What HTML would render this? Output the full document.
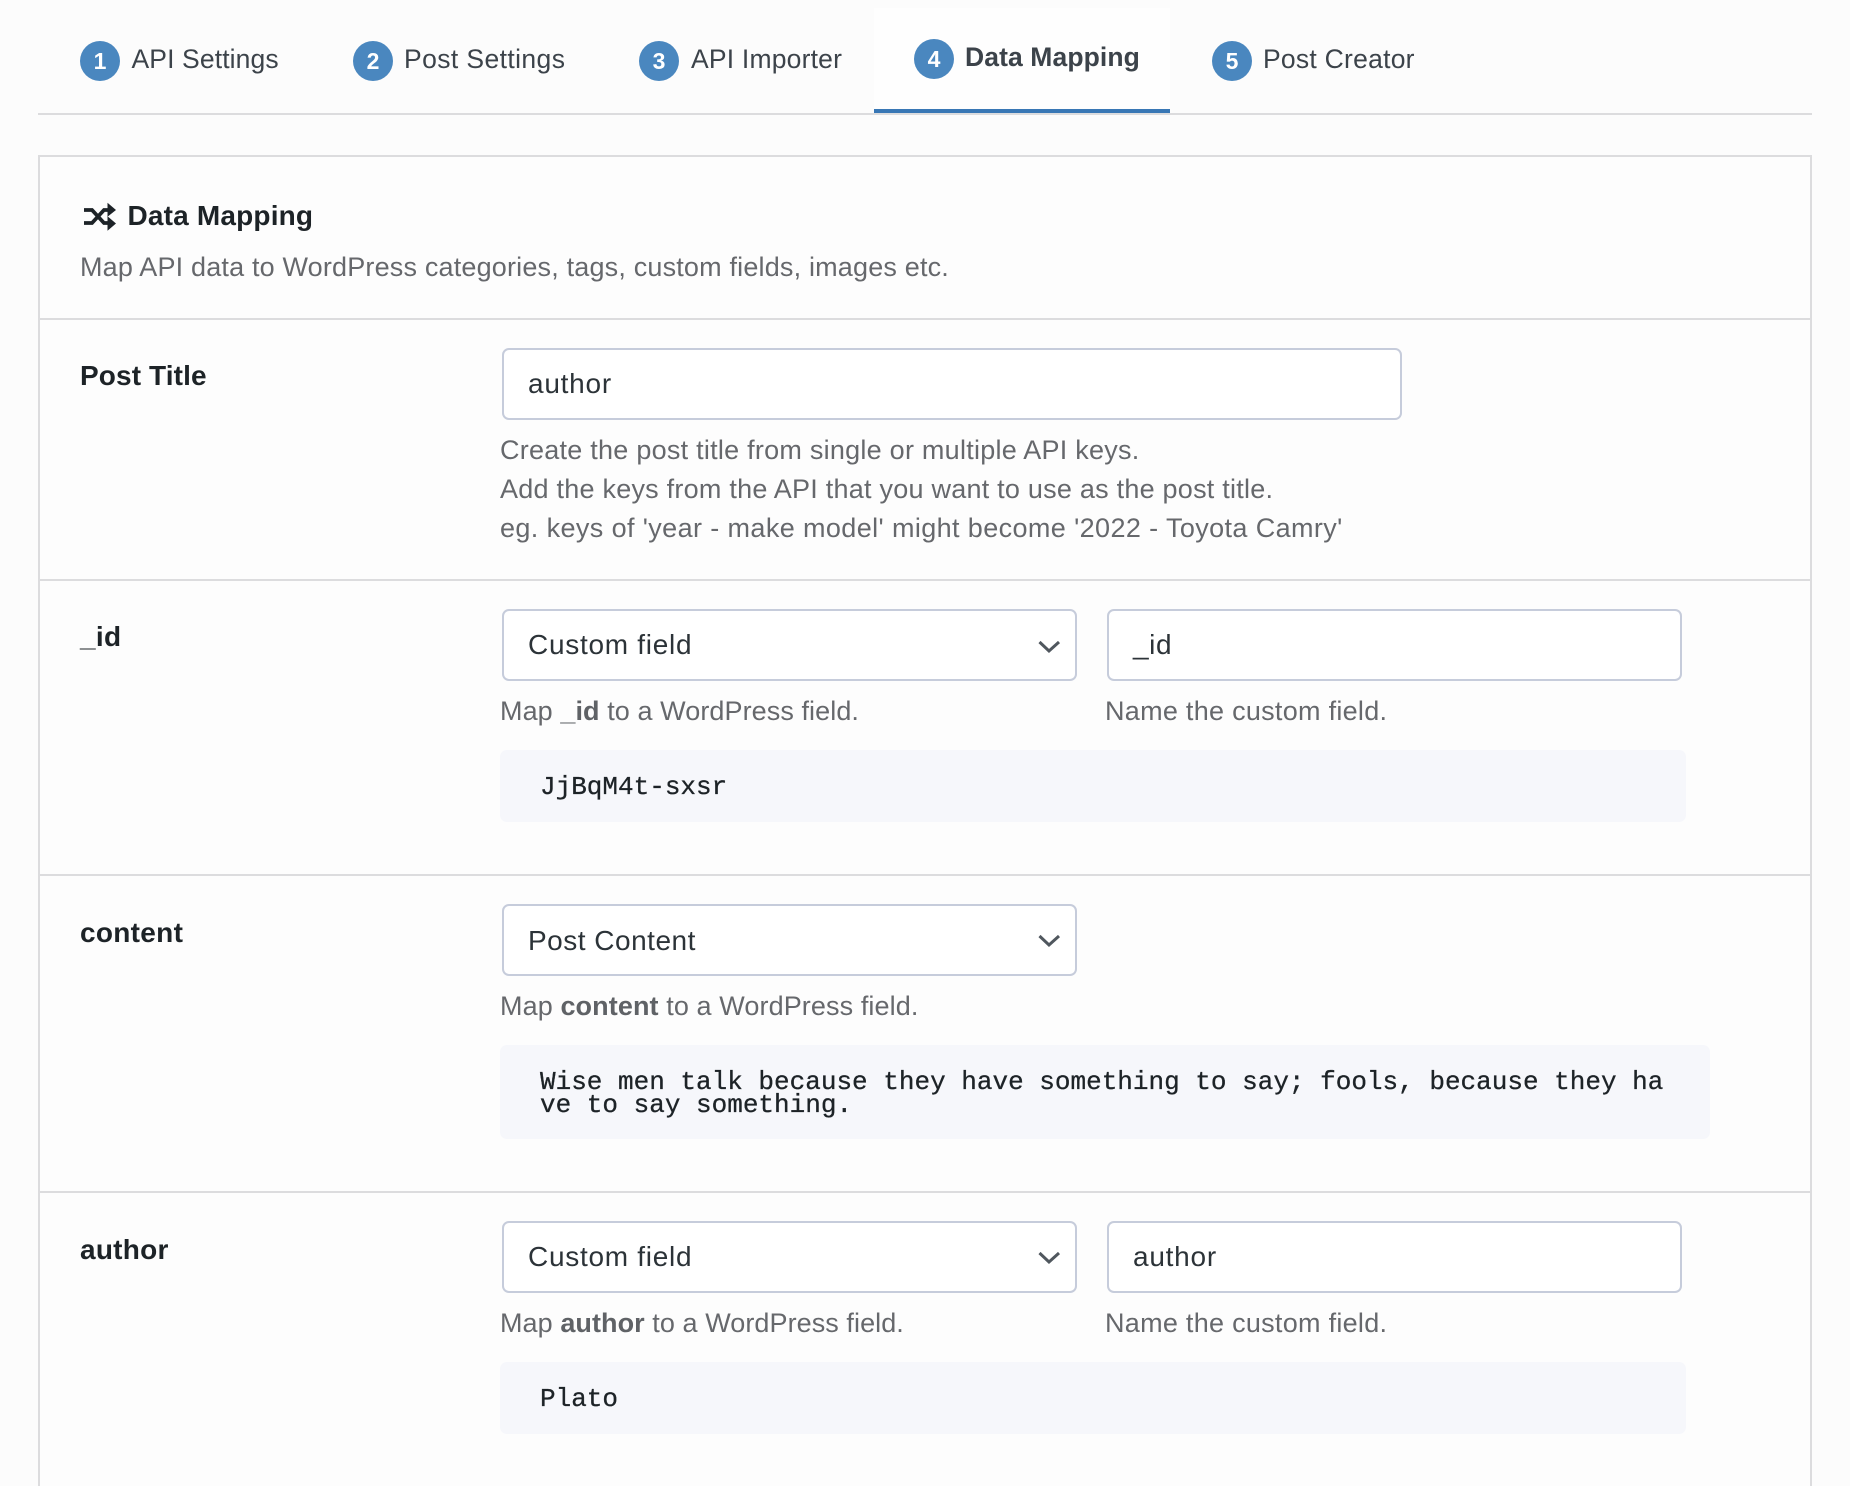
<!DOCTYPE html>
<html><head><meta charset="utf-8"><title>Data Mapping</title>
<style>
html,body{margin:0;padding:0;width:1850px;height:1486px;overflow:hidden;background:#fcfcfc}
body{position:relative;font-family:"Liberation Sans",sans-serif}
.a{position:absolute;box-sizing:border-box}
.t{position:absolute;white-space:nowrap;line-height:40px}
.tab{font-size:26.5px;color:#3c434a}
.c{position:absolute;width:40px;height:40px;border-radius:50%;background:#4a87bf;color:#fff;font-weight:700;font-size:23px;line-height:40px;text-align:center}
.lb{font-size:28px;font-weight:700;color:#1d2327;left:80px;letter-spacing:.12px}
.in{position:absolute;box-sizing:border-box;background:#fff;border:2px solid #c6ccdb;border-radius:7px}
.v{font-size:28px;color:#2c3338;letter-spacing:.72px}
.h{font-size:27px;color:#66686c}
.h b{font-weight:700;color:#5f6266}
.code{position:absolute;left:500px;background:#f6f7fb;border-radius:7px}
.m{position:absolute;left:540px;font:26px/23px "Liberation Mono",monospace;color:#1d2327;white-space:pre;-webkit-text-stroke:.3px #1d2327}
.ln{position:absolute;left:38px;width:1774px;height:2px;background:#dcdcde}
svg{position:absolute;overflow:visible}
</style></head><body>

<div class="a" style="left:874px;top:8px;width:296px;height:105px;background:#fefefe;border-bottom:4px solid #3877b5"></div>
<div class="a" style="left:38px;top:113px;width:1774px;height:2px;background:#dcdcde"></div>

<div class="c" style="left:80px;top:41px">1</div><div class="t tab" style="left:131.5px;top:39px;letter-spacing:.12px">API Settings</div>
<div class="c" style="left:353px;top:41px">2</div><div class="t tab" style="left:404px;top:39px;letter-spacing:.4px">Post Settings</div>
<div class="c" style="left:639px;top:41px">3</div><div class="t tab" style="left:691px;top:39px;letter-spacing:.2px">API Importer</div>
<div class="c" style="left:914px;top:39px">4</div><div class="t tab" style="left:965px;top:37px;font-weight:700;letter-spacing:.1px">Data Mapping</div>
<div class="c" style="left:1212px;top:41px">5</div><div class="t tab" style="left:1263px;top:39px;letter-spacing:.25px">Post Creator</div>

<div class="a" style="left:38px;top:155px;width:1774px;height:1340px;border:2px solid #dcdcde;background:#fdfdfd"></div>

<svg style="left:0;top:0" width="1850" height="300"><path d="M84 210H92L104 223H110M84 223H92L104 210H110" fill="none" stroke="#1d2327" stroke-width="3.8"/><path d="M107.5 202.7L116 210L107.5 216.7ZM107.5 216.3L116 223.5L107.5 230.7Z" fill="#1d2327"/></svg>
<div class="t" style="left:127.5px;top:195.5px;font-size:28px;font-weight:700;color:#1d2327;letter-spacing:.18px">Data Mapping</div>
<div class="t h" style="left:80px;top:247px;letter-spacing:.18px">Map API data to WordPress categories, tags, custom fields, images etc.</div>

<div class="ln" style="top:318px"></div>
<div class="t lb" style="top:356px">Post Title</div>
<div class="in" style="left:502px;top:348px;width:900px;height:72px"></div>
<div class="t v" style="left:528px;top:364px;letter-spacing:.75px">author</div>
<div class="t h" style="left:500px;top:429.5px;letter-spacing:.25px">Create the post title from single or multiple API keys.</div>
<div class="t h" style="left:500px;top:468.5px;letter-spacing:.235px">Add the keys from the API that you want to use as the post title.</div>
<div class="t h" style="left:500px;top:507.5px;letter-spacing:.39px">eg. keys of 'year - make model' might become '2022 - Toyota Camry'</div>

<div class="ln" style="top:579px"></div>
<div class="t lb" style="top:617px;letter-spacing:.3px">_id</div>
<div class="in" style="left:502px;top:609px;width:575px;height:72px"></div>
<div class="t v" style="left:528px;top:625px">Custom field</div>
<svg style="left:0;top:0" width="1850" height="1486"><path d="M1039.5 642L1049 651L1059 642" fill="none" stroke="#50575e" stroke-width="3"/></svg>
<div class="in" style="left:1107px;top:609px;width:575px;height:72px"></div>
<div class="t v" style="left:1133px;top:625px;letter-spacing:.6px">_id</div>
<div class="t h" style="left:500px;top:691px;letter-spacing:.08px">Map <b>_id</b> to a WordPress field.</div>
<div class="t h" style="left:1105px;top:691px;letter-spacing:.28px">Name the custom field.</div>
<div class="code" style="top:750px;width:1186px;height:72px"></div>
<div class="m" style="top:775.5px">JjBqM4t-sxsr</div>

<div class="ln" style="top:874px"></div>
<div class="t lb" style="top:912.5px;letter-spacing:.3px">content</div>
<div class="in" style="left:502px;top:904px;width:575px;height:72px"></div>
<div class="t v" style="left:528px;top:920.5px;letter-spacing:.5px">Post Content</div>
<div class="t h" style="left:500px;top:986px;letter-spacing:.1px">Map <b>content</b> to a WordPress field.</div>
<div class="code" style="top:1045px;width:1210px;height:94px"></div>
<div class="m" style="top:1070.5px">Wise men talk because they have something to say; fools, because they ha
ve to say something.</div>

<div class="ln" style="top:1191px"></div>
<div class="t lb" style="top:1229.5px;letter-spacing:.25px">author</div>
<div class="in" style="left:502px;top:1221px;width:575px;height:72px"></div>
<div class="t v" style="left:528px;top:1237px">Custom field</div>
<div class="in" style="left:1107px;top:1221px;width:575px;height:72px"></div>
<div class="t v" style="left:1133px;top:1237px;letter-spacing:.75px">author</div>
<div class="t h" style="left:500px;top:1303px;letter-spacing:.07px">Map <b>author</b> to a WordPress field.</div>
<div class="t h" style="left:1105px;top:1303px;letter-spacing:.28px">Name the custom field.</div>
<div class="code" style="top:1362px;width:1186px;height:72px"></div>
<div class="m" style="top:1387.5px">Plato</div>

<svg style="left:0;top:0" width="1850" height="1486"><path d="M1039.5 936L1049 945L1059 936M1039.5 1253L1049 1262L1059 1253" fill="none" stroke="#50575e" stroke-width="3"/></svg>
</body></html>
